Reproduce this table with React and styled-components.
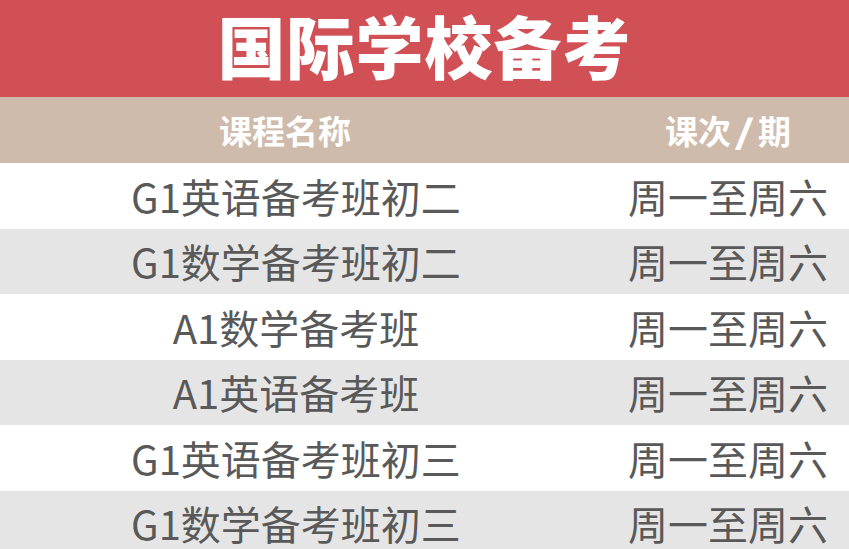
import styled, { createGlobalStyle } from "styled-components";

const GlobalStyle = createGlobalStyle`
  html, body {
    margin: 0;
    padding: 0;
    background: #ffffff;
    overflow: hidden;
  }
  body {
    font-family: "Noto Sans CJK SC", "Noto Sans", sans-serif;
  }
`;

const Page = styled.div`
  width: 849px;
  height: 549px;
  overflow: hidden;
`;

const Title = styled.h1`
  margin: 0;
  height: 97px;
  background: #d05055;
  color: #ffffff;
  font-size: 68px;
  font-weight: 900;
  line-height: 90px;
  text-align: center;
  letter-spacing: 1px;
`;

const Row = styled.div`
  display: grid;
  grid-template-columns: 592px 1fr;
  align-items: center;
  height: ${(p) => (p.$head ? "66px" : "65.5px")};
  background: ${(p) => (p.$head ? "#cfbbac" : p.$alt ? "#e5e5e5" : "#ffffff")};
`;

const Cell = styled.div`
  text-align: center;
  padding-left: ${(p) => (p.$right ? "15px" : "0")};
  color: ${(p) => (p.$head ? "#ffffff" : "#595959")};
  font-size: ${(p) => (p.$head ? "33px" : "40px")};
  font-weight: ${(p) => (p.$head ? 700 : 400)};
  line-height: 1;
`;

const Slash = styled.span`
  display: inline-block;
  transform: scaleX(1.6);
  padding: 0 7px;
`;

const courses = [
  "G1英语备考班初二",
  "G1数学备考班初二",
  "A1数学备考班",
  "A1英语备考班",
  "G1英语备考班初三",
  "G1数学备考班初三",
];

export default function App() {
  return (
    <Page>
      <GlobalStyle />
      <Title>国际学校备考</Title>
      <Row $head>
        <Cell $head style={{ paddingRight: 22 }}>课程名称</Cell>
        <Cell $head $right>
          课次<Slash>/</Slash>期
        </Cell>
      </Row>
      {courses.map((name, i) => (
        <Row key={name} $alt={i % 2 === 1}>
          <Cell>{name}</Cell>
          <Cell $right>周一至周六</Cell>
        </Row>
      ))}
    </Page>
  );
}
